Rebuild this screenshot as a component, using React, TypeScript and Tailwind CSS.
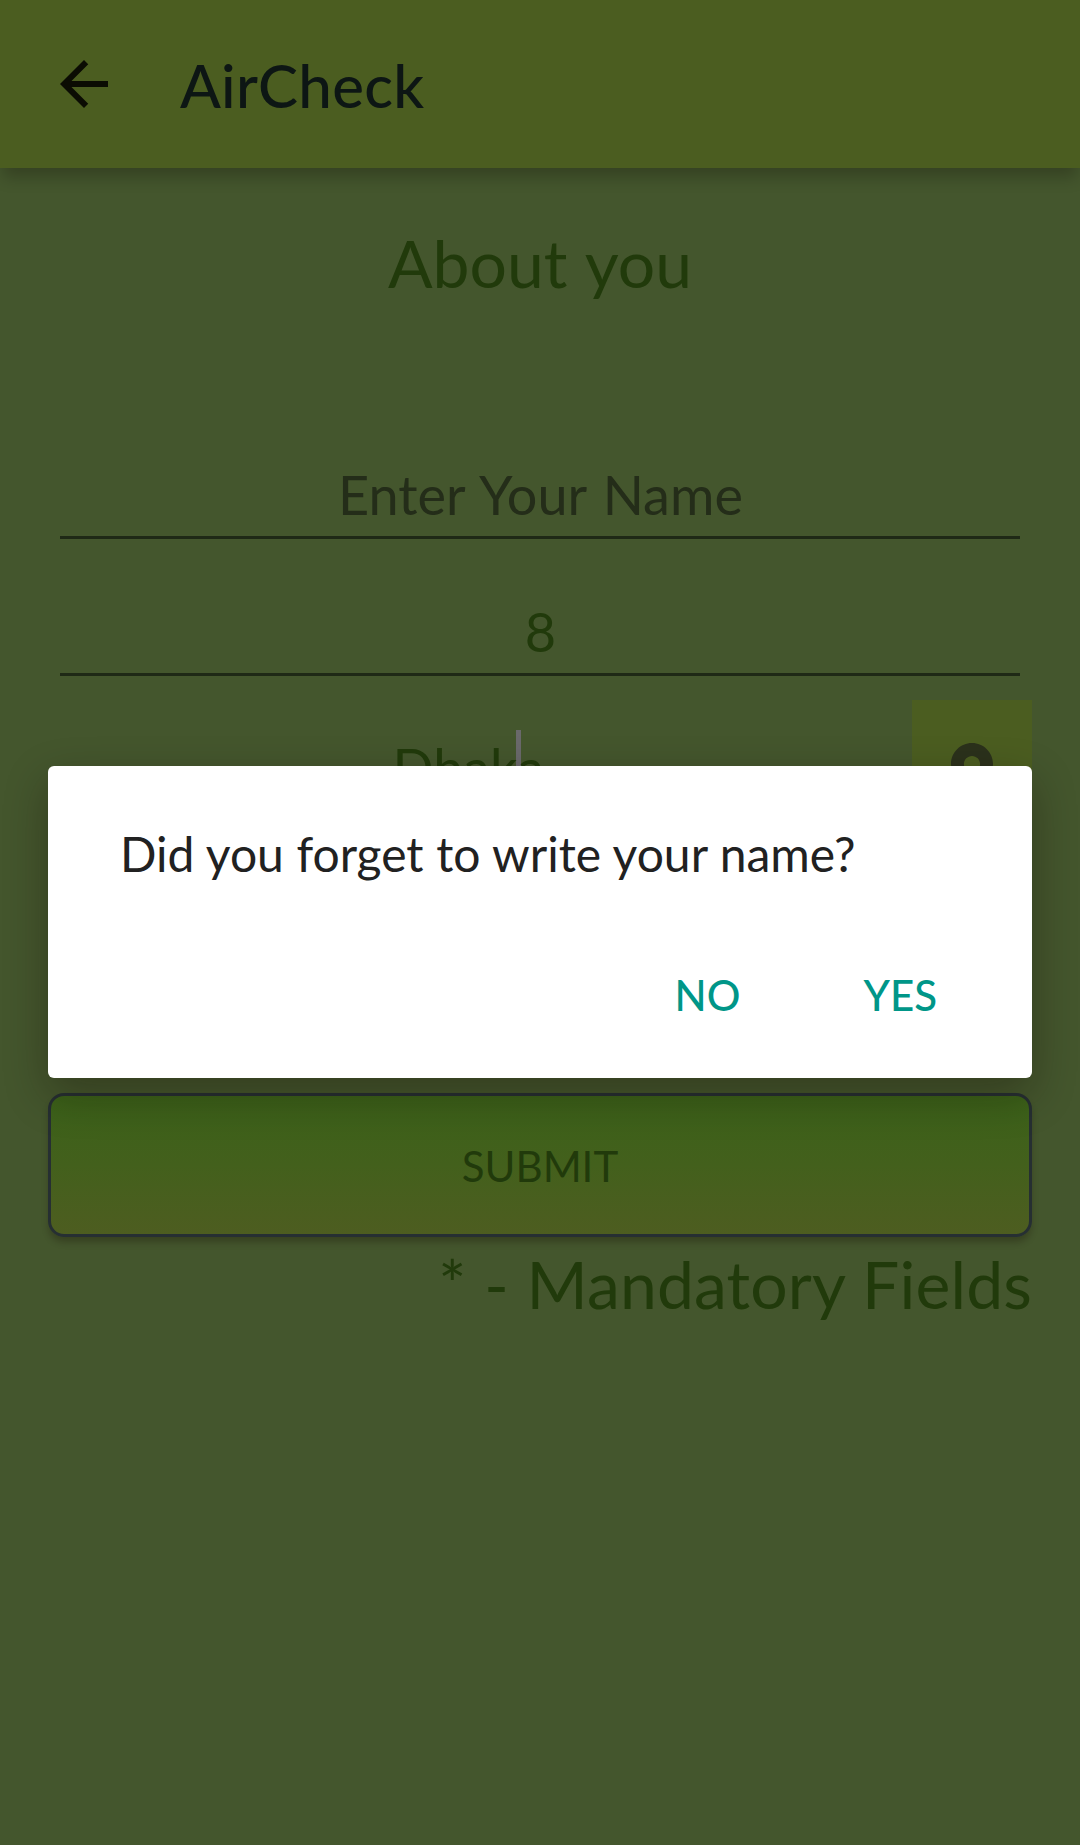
import React from "react";

function BackArrow() {
  return (
    <svg viewBox="0 0 24 24" className="size-18" fill="#0b0c03">
      <path d="M20 11H7.83l5.59-5.59L12 4l-8 8 8 8 1.41-1.41L7.83 13H20v-2z" />
    </svg>
  );
}

function Pin() {
  return (
    <svg viewBox="0 0 24 24" className="size-18" fill="#2b311b">
      <path d="M12 2C8.13 2 5 5.13 5 9c0 5.25 7 13 7 13s7-7.75 7-13c0-3.87-3.13-7-7-7zm0 9.7c-1.49 0-2.7-1.21-2.7-2.7s1.21-2.7 2.7-2.7 2.7 1.21 2.7 2.7-1.21 2.7-2.7 2.7z" />
    </svg>
  );
}

function Dialog() {
  return (
    <div className="absolute inset-x-12 top-[766px] flex h-[312px] flex-col rounded-md bg-white shadow-[0_16px_44px_rgba(20,8,0,0.32)]">
      <p className="mt-[53px] ml-[72px] h-[70px] text-[48px] leading-[70px] whitespace-nowrap text-[#212121] [word-spacing:0.3px]">
        Did you forget to write your name?
      </p>
      <div className="mt-[71px] flex h-[70px] justify-end pr-[95px] text-[42px] leading-[70px] font-medium text-[#009688]">
        <button className="mr-[123px]">NO</button>
        <button>YES</button>
      </div>
    </div>
  );
}

export default function App() {
  return (
    <div className="relative flex h-[1845px] w-[1080px] flex-col overflow-hidden bg-[#44562d] font-['Lato',sans-serif] text-[#213a0b]">
      <header className="flex h-[168px] shrink-0 items-center bg-[#4b5d20] pl-12 shadow-[0_12px_15px_-3px_rgba(10,5,0,0.24)]">
        <BackArrow />
        <h1 className="ml-[60px] pt-[2px] text-[60px] leading-[80px] font-medium tracking-[0.25px] text-[#0d1614]">AirCheck</h1>
      </header>
      <main className="flex flex-col px-12">
        <h2 className="mt-[55px] h-20 text-center text-[66px] leading-[80px] [word-spacing:2px]">About you</h2>
        <div className="mx-3 mt-[151px] h-[85px] border-b-[3px] border-[#1f2916] pl-px text-center text-[54px] leading-[82px] text-[#242d19] [word-spacing:2.8px]">
          Enter Your Name
        </div>
        <div className="mx-3 mt-[52px] h-[85px] border-b-[3px] border-[#1f2916] pl-px text-center text-[54px] leading-[82px]">
          8
        </div>
        <div className="mt-6 flex h-[146px]">
          <div className="mt-7 flex h-20 flex-1 justify-center pr-[23px] text-[54px] leading-[80px]">
            <span className="relative isolate">
              Dhaka
              <i className="absolute top-[2px] left-[123px] -z-10 h-[70px] w-[5px] bg-[#6a696b]" />
            </span>
          </div>
          <div className="flex w-[120px] items-center justify-center bg-[#4b5d20]">
            <Pin />
          </div>
        </div>
        <button className="mt-[247px] h-36 rounded-[16px] border-[3px] border-[#262f32] bg-linear-to-b from-[#3b6119] via-[#43601c] to-[#4d5d20] text-[42px] shadow-[0_6px_7px_-1px_rgba(20,10,0,0.28)]">
          <span className="relative top-px">SUBMIT</span>
        </button>
        <p className="mt-[7px] h-20 text-right text-[66px] leading-[80px] tracking-[0.15px] whitespace-nowrap [word-spacing:0.6px]">
          * - Mandatory Fields
        </p>
      </main>
      <Dialog />
    </div>
  );
}
